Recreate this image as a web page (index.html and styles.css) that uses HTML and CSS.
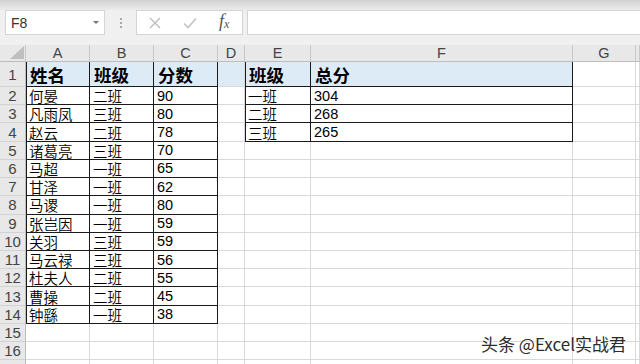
FILE: index.html
```html
<!DOCTYPE html>
<html lang="zh">
<head>
<meta charset="utf-8">
<link rel="stylesheet" href="styles.css">
</head>
<body>
<div class="app">
  <div class="topstrip"></div>
  <div class="bar">
    <div class="namebox"><span class="ref">F8</span><span class="caret"></span></div>
    <div class="grip"><i></i><i></i><i></i></div>
    <div class="fnbox">
      <svg class="ico" width="12" height="12" viewBox="0 0 12 12"><path d="M1 1L11 11M11 1L1 11" stroke="#bdbdbd" stroke-width="1.4" fill="none"/></svg>
      <svg class="ico" width="14" height="12" viewBox="0 0 14 12"><path d="M1 6.5L5 10.5L13 1.5" stroke="#c4c4c4" stroke-width="1.6" fill="none"/></svg>
      <span class="fx"><i>f</i><sub>x</sub></span>
    </div>
    <div class="input"></div>
  </div>
  <div class="sheet">
    <div class="row hdr"><div class="c corner"><svg width="14" height="13" viewBox="0 0 14 13"><path d="M14 0L14 13L0 13Z" fill="#bfbfbf"/></svg></div><div class="c">A</div><div class="c">B</div><div class="c">C</div><div class="c">D</div><div class="c">E</div><div class="c">F</div><div class="c">G</div><div class="c"></div></div>
    <div class="row r1"><div class="c h">1</div><div class="c t tl blue b">姓名</div><div class="c t blue b">班级</div><div class="c t blue b">分数</div><div class="c blue"></div><div class="c t tl blue b">班级</div><div class="c t blue b">总分</div><div class="c"></div><div class="c"></div></div>
    <div class="row"><div class="c h">2</div><div class="c t tl">何晏</div><div class="c t">二班</div><div class="c t">90</div><div class="c"></div><div class="c t tl">一班</div><div class="c t">304</div><div class="c"></div><div class="c"></div></div>
    <div class="row"><div class="c h">3</div><div class="c t tl">凡雨凤</div><div class="c t">三班</div><div class="c t">80</div><div class="c"></div><div class="c t tl">二班</div><div class="c t">268</div><div class="c"></div><div class="c"></div></div>
    <div class="row"><div class="c h">4</div><div class="c t tl">赵云</div><div class="c t">二班</div><div class="c t">78</div><div class="c"></div><div class="c t tl">三班</div><div class="c t">265</div><div class="c"></div><div class="c"></div></div>
    <div class="row"><div class="c h">5</div><div class="c t tl">诸葛亮</div><div class="c t">三班</div><div class="c t">70</div><div class="c"></div><div class="c"></div><div class="c"></div><div class="c"></div><div class="c"></div></div>
    <div class="row"><div class="c h">6</div><div class="c t tl">马超</div><div class="c t">一班</div><div class="c t">65</div><div class="c"></div><div class="c"></div><div class="c"></div><div class="c"></div><div class="c"></div></div>
    <div class="row"><div class="c h">7</div><div class="c t tl">甘泽</div><div class="c t">一班</div><div class="c t">62</div><div class="c"></div><div class="c"></div><div class="c"></div><div class="c"></div><div class="c"></div></div>
    <div class="row"><div class="c h">8</div><div class="c t tl">马谡</div><div class="c t">一班</div><div class="c t">80</div><div class="c"></div><div class="c"></div><div class="c"></div><div class="c"></div><div class="c"></div></div>
    <div class="row"><div class="c h">9</div><div class="c t tl">张岂因</div><div class="c t">一班</div><div class="c t">59</div><div class="c"></div><div class="c"></div><div class="c"></div><div class="c"></div><div class="c"></div></div>
    <div class="row"><div class="c h">10</div><div class="c t tl">关羽</div><div class="c t">三班</div><div class="c t">59</div><div class="c"></div><div class="c"></div><div class="c"></div><div class="c"></div><div class="c"></div></div>
    <div class="row"><div class="c h">11</div><div class="c t tl">马云禄</div><div class="c t">三班</div><div class="c t">56</div><div class="c"></div><div class="c"></div><div class="c"></div><div class="c"></div><div class="c"></div></div>
    <div class="row"><div class="c h">12</div><div class="c t tl">杜夫人</div><div class="c t">二班</div><div class="c t">55</div><div class="c"></div><div class="c"></div><div class="c"></div><div class="c"></div><div class="c"></div></div>
    <div class="row"><div class="c h">13</div><div class="c t tl">曹操</div><div class="c t">二班</div><div class="c t">45</div><div class="c"></div><div class="c"></div><div class="c"></div><div class="c"></div><div class="c"></div></div>
    <div class="row"><div class="c h">14</div><div class="c t tl">钟繇</div><div class="c t">一班</div><div class="c t">38</div><div class="c"></div><div class="c"></div><div class="c"></div><div class="c"></div><div class="c"></div></div>
    <div class="row"><div class="c h">15</div><div class="c"></div><div class="c"></div><div class="c"></div><div class="c"></div><div class="c"></div><div class="c"></div><div class="c"></div><div class="c"></div></div>
    <div class="row"><div class="c h">16</div><div class="c"></div><div class="c"></div><div class="c"></div><div class="c"></div><div class="c"></div><div class="c"></div><div class="c"></div><div class="c"></div></div>
    <div class="row"><div class="c h"></div><div class="c"></div><div class="c"></div><div class="c"></div><div class="c"></div><div class="c"></div><div class="c"></div><div class="c"></div><div class="c"></div></div>
  </div>
  <div class="watermark">头条 @Excel实战君</div>
</div>
</body>
</html>
```

FILE: styles.css
```css
* { box-sizing: border-box; }
html, body { margin: 0; padding: 0; background: #fff; }
body { width: 640px; height: 364px; overflow: hidden; font-family: "Liberation Sans", "Noto Sans CJK SC", sans-serif; }
.app { position: relative; width: 640px; height: 364px; overflow: hidden; background: #f0f0f0; }
.topstrip { height: 10px; background: linear-gradient(#d2d2d2, #ebebeb); }
.bar { height: 35px; display: flex; align-items: flex-start; padding-left: 5px; background: #f0f0f0; }
.namebox { width: 100px; height: 25px; background: #fff; border: 1px solid #d4d4d4; display: flex; align-items: center; justify-content: space-between; padding: 0 5px 0 5px; }
.ref { font-size: 14px; color: #333; }
.caret { width: 0; height: 0; border-left: 3px solid transparent; border-right: 3px solid transparent; border-top: 3px solid #777; }
.grip { width: 31px; height: 25px; display: flex; flex-direction: column; align-items: center; justify-content: center; gap: 2px; }
.grip i { width: 2px; height: 2px; background: #a8a8a8; display: block; }
.fnbox { width: 107px; height: 25px; background: #fff; border: 1px solid #d4d4d4; display: flex; align-items: center; padding-left: 12px; gap: 22px; }
.fx { font-family: "Liberation Serif", serif; font-size: 18px; line-height: 18px; color: #555; margin-left: 0; }
.fx sub { font-size: 12px; font-style: italic; vertical-align: -1px; }
.input { flex: 1; margin-left: 4px; height: 25px; background: #fff; border: 1px solid #d4d4d4; border-right: none; }
.sheet { background: #fff; }
.row { display: grid; grid-template-columns: 26px 64px 64px 64px 27px 66px 262px 63px 4px; height: 18.23px; }
.row.hdr { height: 17px; background: #e8e8e8; }
.row.r1 { height: 25px; }
.c { border-right: 1px solid #d9d9d9; border-bottom: 1px solid #d9d9d9; font-size: 14.5px; color: #000; display: flex; align-items: center; padding-left: 3px; white-space: nowrap; overflow: hidden; font-weight: 350; }
.hdr .c { border-right: 1px solid #c8c8c8; border-bottom: 1px solid #bdbdbd; justify-content: center; padding: 0; color: #444; font-size: 14.5px; font-weight: 400; }
.hdr .corner { justify-content: flex-end; align-items: flex-end; padding: 0 1px 2px 0; }
.c.h { background: #e8e8e8; border-right: 1px solid #bdbdbd; border-bottom: 1px solid #d2d2d2; justify-content: center; padding: 0; color: #444; font-size: 15px; font-weight: 400; }
.c.t { border-right-color: #1a1a1a; border-bottom-color: #1a1a1a; }
.c.tl { box-shadow: inset 1px 0 0 #1a1a1a; }
.c.blue { background: #ddebf7; }
.c.b { font-weight: 700; font-size: 17.5px; padding-left: 4px; }
.watermark { position: absolute; left: 481px; top: 334px; font-family: "Noto Sans CJK SC", sans-serif; font-size: 17px; color: #2b2b2b; line-height: 20px; text-shadow: 0 0 2px #fff, 0 0 2px #fff, 0 0 1px #fff; }
```
